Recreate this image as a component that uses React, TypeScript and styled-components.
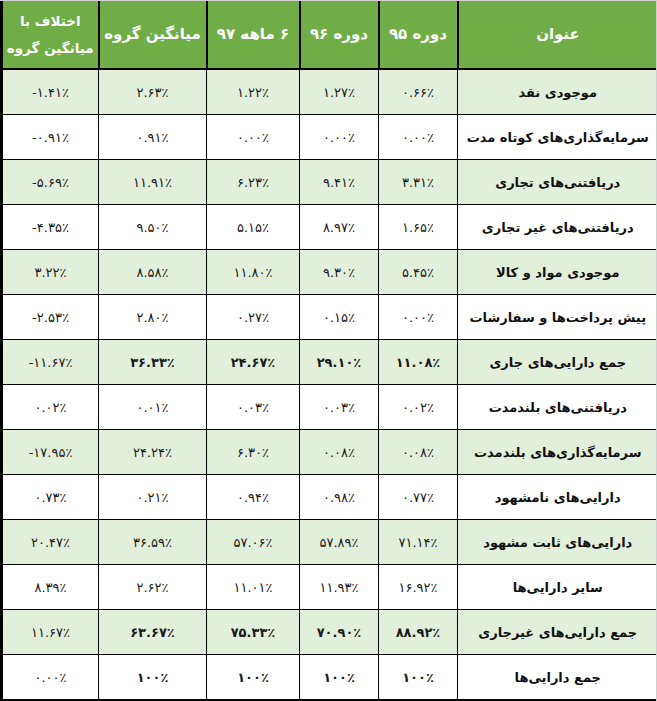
import React from "react";
import styled, { createGlobalStyle } from "styled-components";

const GlobalStyle = createGlobalStyle`
  html, body { margin: 0; padding: 0; background: #ffffff; }
  body { font-family: "DejaVu Sans", "Noto Sans", sans-serif; }
`;

const Frame = styled.div`
  width: 657px;
  height: 701px;
  box-sizing: border-box;
  border-top: 1px solid #d4d4d4;
  border-right: 1px solid #cfcfcf;
  overflow: hidden;
`;

const Table = styled.table`
  direction: rtl;
  width: 656px;
  table-layout: fixed;
  border-collapse: collapse;
  border-left: 3px solid #000;
  border-bottom: 2px solid #000;
`;

const HeadCell = styled.th<{ $compact?: boolean }>`
  background: #70ad47;
  color: #ffffff;
  font-family: "DejaVu Sans", sans-serif;
  font-weight: 700;
  font-size: ${(p) => (p.$compact ? "13.5px" : "15px")};
  line-height: 27px;
  height: 67px;
  padding: 0;
  white-space: nowrap;
  text-align: center;
  border-left: 2px solid #000;
  border-bottom: 2px solid #000;
  &:last-child { border-left: none; }
`;

const Row = styled.tr<{ $shaded: boolean }>`
  background: ${(p) => (p.$shaded ? "#e2efda" : "#ffffff")};
`;

const LabelCell = styled.td`
  height: 44px;
  padding: 0 4px;
  text-align: center;
  font-family: "DejaVu Sans", sans-serif;
  font-size: 13px;
  font-weight: 700;
  color: #111;
  border: 1px solid #000;
  border-right: none;
  white-space: nowrap;
`;

const NumCell = styled.td<{ $bold: boolean }>`
  height: 44px;
  padding: 0;
  text-align: center;
  direction: ltr;
  font-family: "DejaVu Sans", sans-serif;
  font-size: 13px;
  font-weight: ${(p) => (p.$bold ? 700 : 400)};
  color: #1a1a1a;
  border: 1px solid #000;
  &:last-child { border-left: none; }
`;

type RowData = { label: string; values: string[]; bold?: boolean };

const rows: RowData[] = [
  { label: "موجودی نقد", values: ["۰.۶۶٪", "۱.۲۷٪", "۱.۲۲٪", "۲.۶۳٪", "-۱.۴۱٪"] },
  { label: "سرمایه‌گذاری‌های کوتاه مدت", values: ["۰.۰۰٪", "۰.۰۰٪", "۰.۰۰٪", "۰.۹۱٪", "-۰.۹۱٪"] },
  { label: "دریافتنی‌های تجاری", values: ["۳.۳۱٪", "۹.۴۱٪", "۶.۲۳٪", "۱۱.۹۱٪", "-۵.۶۹٪"] },
  { label: "دریافتنی‌های غیر تجاری", values: ["۱.۶۵٪", "۸.۹۷٪", "۵.۱۵٪", "۹.۵۰٪", "-۴.۳۵٪"] },
  { label: "موجودی مواد و کالا", values: ["۵.۴۵٪", "۹.۳۰٪", "۱۱.۸۰٪", "۸.۵۸٪", "۳.۲۲٪"] },
  { label: "پیش پرداخت‌ها و سفارشات", values: ["۰.۰۰٪", "۰.۱۵٪", "۰.۲۷٪", "۲.۸۰٪", "-۲.۵۳٪"] },
  { label: "جمع دارایی‌های جاری", values: ["۱۱.۰۸٪", "۲۹.۱۰٪", "۲۴.۶۷٪", "۳۶.۳۳٪", "-۱۱.۶۷٪"], bold: true },
  { label: "دریافتنی‌های بلندمدت", values: ["۰.۰۲٪", "۰.۰۳٪", "۰.۰۳٪", "۰.۰۱٪", "۰.۰۲٪"] },
  { label: "سرمایه‌گذاری‌های بلندمدت", values: ["۰.۰۸٪", "۰.۰۸٪", "۶.۳۰٪", "۲۴.۲۴٪", "-۱۷.۹۵٪"] },
  { label: "دارایی‌های نامشهود", values: ["۰.۷۷٪", "۰.۹۸٪", "۰.۹۴٪", "۰.۲۱٪", "۰.۷۳٪"] },
  { label: "دارایی‌های ثابت مشهود", values: ["۷۱.۱۴٪", "۵۷.۸۹٪", "۵۷.۰۶٪", "۳۶.۵۹٪", "۲۰.۴۷٪"] },
  { label: "سایر دارایی‌ها", values: ["۱۶.۹۲٪", "۱۱.۹۳٪", "۱۱.۰۱٪", "۲.۶۲٪", "۸.۳۹٪"] },
  { label: "جمع دارایی‌های غیرجاری", values: ["۸۸.۹۲٪", "۷۰.۹۰٪", "۷۵.۳۳٪", "۶۳.۶۷٪", "۱۱.۶۷٪"], bold: true },
  { label: "جمع دارایی‌ها", values: ["۱۰۰٪", "۱۰۰٪", "۱۰۰٪", "۱۰۰٪", "۰.۰۰٪"], bold: true },
];

const headers = ["عنوان", "دوره ۹۵", "دوره ۹۶", "۶ ماهه ۹۷", "میانگین گروه"];
const widths = [200, 79, 79, 93, 108, 97];

export default function App() {
  return (
    <>
      <GlobalStyle />
      <Frame>
        <Table>
          <colgroup>
            {widths.map((w, i) => (
              <col key={i} style={{ width: w }} />
            ))}
          </colgroup>
          <thead>
            <tr>
              {headers.map((h) => (
                <HeadCell key={h}>{h}</HeadCell>
              ))}
              <HeadCell $compact>
                اختلاف با
                <br />
                میانگین گروه
              </HeadCell>
            </tr>
          </thead>
          <tbody>
            {rows.map((r, i) => (
              <Row key={r.label} $shaded={i % 2 === 0}>
                <LabelCell>{r.label}</LabelCell>
                {r.values.map((v, j) => (
                  <NumCell key={j} $bold={!!r.bold && j < 4}>
                    {v}
                  </NumCell>
                ))}
              </Row>
            ))}
          </tbody>
        </Table>
      </Frame>
    </>
  );
}
